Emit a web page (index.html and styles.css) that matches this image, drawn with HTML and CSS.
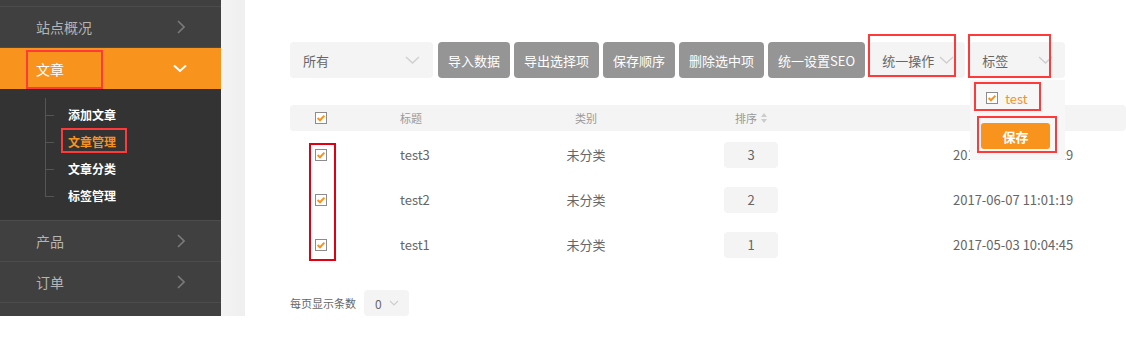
FILE: index.html
```html
<!DOCTYPE html>
<html lang="zh-CN">
<head>
    <meta charset="UTF-8">
    <title>文章管理</title>
    <link rel="stylesheet" href="styles.css">
</head>
<body>
<div class="page">
    <div class="sidebar">
        <div class="menu-top"></div>
        <div class="menu-item">
            <span>站点概况</span>
            <svg class="arrow" width="8" height="14" viewBox="0 0 8 14"><polyline points="1,1 7,7 1,13" fill="none" stroke="#7a7a7a" stroke-width="1.6"/></svg>
        </div>
        <div class="menu-item active">
            <span>文章</span>
            <svg class="arrow-down" width="14" height="9" viewBox="0 0 14 9"><polyline points="1,1.5 7,7 13,1.5" fill="none" stroke="#fff" stroke-width="2"/></svg>
        </div>
        <div class="submenu">
            <div class="sub-item">添加文章</div>
            <div class="sub-item current">文章管理</div>
            <div class="sub-item">文章分类</div>
            <div class="sub-item last">标签管理</div>
        </div>
        <div class="menu-item">
            <span>产品</span>
            <svg class="arrow" width="8" height="14" viewBox="0 0 8 14"><polyline points="1,1 7,7 1,13" fill="none" stroke="#7a7a7a" stroke-width="1.6"/></svg>
        </div>
        <div class="menu-item">
            <span>订单</span>
            <svg class="arrow" width="8" height="14" viewBox="0 0 8 14"><polyline points="1,1 7,7 1,13" fill="none" stroke="#7a7a7a" stroke-width="1.6"/></svg>
        </div>
        <div class="menu-item"></div>
    </div>
    <div class="strip"></div>
    <div class="main">
        <div class="toolbar">
            <div class="select wide">
                <span>所有</span>
                <svg class="caret" width="15" height="8" viewBox="0 0 15 8"><polyline points="1,1 7.5,7 14,1" fill="none" stroke="#cfcfcf" stroke-width="1.4"/></svg>
            </div>
            <button class="btn">导入数据</button>
            <button class="btn">导出选择项</button>
            <button class="btn">保存顺序</button>
            <button class="btn">删除选中项</button>
            <button class="btn">统一设置SEO</button>
            <div class="select op">
                <span>统一操作</span>
                <svg class="caret" width="15" height="8" viewBox="0 0 15 8"><polyline points="1,1 7.5,7 14,1" fill="none" stroke="#cfcfcf" stroke-width="1.4"/></svg>
            </div>
            <div class="select tag">
                <span>标签</span>
                <svg class="caret" width="15" height="8" viewBox="0 0 15 8"><polyline points="1,1 7.5,7 14,1" fill="none" stroke="#cfcfcf" stroke-width="1.4"/></svg>
                <div class="dropdown">
                    <div class="drop-option">
                        <svg class="check" width="12" height="12" viewBox="0 0 12 12"><rect x="0.5" y="0.5" width="11" height="11" fill="#fff" stroke="#8c8c8c"/><polyline points="2.6,6 5,8.3 9.4,3.6" fill="none" stroke="#f7931e" stroke-width="2"/></svg>
                        <span>test</span>
                    </div>
                    <button class="save">保存</button>
                </div>
            </div>
        </div>

        <div class="table">
            <div class="row head">
                <div class="cell c-check"><svg class="check" width="12" height="12" viewBox="0 0 12 12"><rect x="0.5" y="0.5" width="11" height="11" fill="#fff" stroke="#8c8c8c"/><polyline points="2.6,6 5,8.3 9.4,3.6" fill="none" stroke="#f7931e" stroke-width="2"/></svg></div>
                <div class="cell c-title">标题</div>
                <div class="cell c-cat">类别</div>
                <div class="cell c-sort">排序 <svg class="sort-icon" width="6" height="10" viewBox="0 0 6 10"><polygon points="3,0 6,4 0,4" fill="#ccc"/><polygon points="0,6 6,6 3,10" fill="#ccc"/></svg></div>
                <div class="cell c-date"></div>
            </div>
            <div class="row">
                <div class="cell c-check"><svg class="check" width="12" height="12" viewBox="0 0 12 12"><rect x="0.5" y="0.5" width="11" height="11" fill="#fff" stroke="#8c8c8c"/><polyline points="2.6,6 5,8.3 9.4,3.6" fill="none" stroke="#f7931e" stroke-width="2"/></svg></div>
                <div class="cell c-title">test3</div>
                <div class="cell c-cat">未分类</div>
                <div class="cell c-sort"><span class="order">3</span></div>
                <div class="cell c-date">2017-06-07 11:01:29</div>
            </div>
            <div class="row">
                <div class="cell c-check"><svg class="check" width="12" height="12" viewBox="0 0 12 12"><rect x="0.5" y="0.5" width="11" height="11" fill="#fff" stroke="#8c8c8c"/><polyline points="2.6,6 5,8.3 9.4,3.6" fill="none" stroke="#f7931e" stroke-width="2"/></svg></div>
                <div class="cell c-title">test2</div>
                <div class="cell c-cat">未分类</div>
                <div class="cell c-sort"><span class="order">2</span></div>
                <div class="cell c-date">2017-06-07 11:01:19</div>
            </div>
            <div class="row">
                <div class="cell c-check"><svg class="check" width="12" height="12" viewBox="0 0 12 12"><rect x="0.5" y="0.5" width="11" height="11" fill="#fff" stroke="#8c8c8c"/><polyline points="2.6,6 5,8.3 9.4,3.6" fill="none" stroke="#f7931e" stroke-width="2"/></svg></div>
                <div class="cell c-title">test1</div>
                <div class="cell c-cat">未分类</div>
                <div class="cell c-sort"><span class="order">1</span></div>
                <div class="cell c-date">2017-05-03 10:04:45</div>
            </div>
        </div>

        <div class="pager">
            <span>每页显示条数</span>
            <div class="select small">
                <span>0</span>
                <svg class="caret" width="10" height="6" viewBox="0 0 10 6"><polyline points="1,1 5,5 9,1" fill="none" stroke="#cfcfcf" stroke-width="1.2"/></svg>
            </div>
        </div>
    </div>
</div>

<!-- 标注框 -->
<div class="mark m-article"></div>
<div class="mark m-manage"></div>
<div class="mark m-checks"></div>
<div class="mark m-op"></div>
<div class="mark m-tag"></div>
<div class="mark m-test"></div>
<div class="mark m-save"></div>
</body>
</html>
```

FILE: styles.css
```css
body {
    margin: 0;
    font-family: "Microsoft YaHei", "Noto Sans CJK SC", sans-serif;
    background: #fff;
    position: relative;
}
.page {
    display: flex;
    height: 316px;
    overflow: hidden;
}

/* 侧边栏 */
.sidebar {
    width: 221px;
    background: #404040;
    flex-shrink: 0;
}
.menu-top {
    height: 6px;
    border-bottom: 1px solid #4c4c4c;
}
.menu-item {
    height: 40px;
    display: flex;
    align-items: center;
    justify-content: space-between;
    padding: 0 36px;
    border-bottom: 1px solid #4c4c4c;
    color: #b4b4b4;
    font-size: 14px;
}
.menu-item.active {
    background: #f8931e;
    color: #fff;
    border-bottom: none;
    height: 41px;
}
.menu-item.active .arrow-down {
    margin-right: -2px;
}
.submenu {
    background: #333;
    padding: 12px 0 11px 0;
    border-bottom: 1px solid #4c4c4c;
}
.sub-item {
    position: relative;
    height: 27px;
    line-height: 27px;
    padding-left: 68px;
    font-size: 12px;
    color: #fff;
    font-weight: bold;
}
.sub-item::before {
    content: "";
    position: absolute;
    left: 45px;
    top: 0;
    bottom: 0;
    width: 1px;
    background: #555;
}
.sub-item:first-child::before {
    top: -3px;
}
.sub-item.last::before {
    bottom: 12px;
}
.sub-item::after {
    content: "";
    position: absolute;
    left: 45px;
    top: 14px;
    width: 9px;
    height: 1px;
    background: #555;
}
.sub-item.current {
    color: #f8931e;
}

.strip {
    width: 24px;
    background: linear-gradient(to right, #f3f3f3, #efefef);
    flex-shrink: 0;
}

/* 主区域 */
.main {
    flex: 1;
    padding: 42px 0 0 45px;
    min-width: 0;
}
.toolbar {
    display: flex;
    gap: 4px;
    height: 36px;
}
.select {
    position: relative;
    background: #f4f4f4;
    border-radius: 4px;
    display: flex;
    align-items: center;
    justify-content: space-between;
    padding: 0 13px;
    font-size: 13px;
    color: #666;
    box-sizing: border-box;
    flex-shrink: 0;
}
.select.wide {
    width: 143px;
    margin-right: 1px;
}
.select.op {
    width: 96px;
    padding: 0 11px 0 13px;
}
.select.tag {
    width: 95px;
    margin-left: 1px;
    padding: 0 12px 0 12px;
}
.btn {
    border: none;
    background: #959595;
    color: #fff;
    font-family: inherit;
    font-size: 13px;
    border-radius: 4px;
    padding: 0 10px;
    height: 36px;
    flex-shrink: 0;
}

/* 标签下拉 */
.dropdown {
    position: absolute;
    top: 38px;
    left: 0;
    width: 95px;
    height: 80px;
    background: #f7f7f7;
    box-sizing: border-box;
    padding: 0 6px 0 11px;
    z-index: 2;
}
.drop-option {
    display: flex;
    align-items: center;
    gap: 7px;
    padding-left: 5px;
    height: 36px;
    color: #f8931e;
    font-size: 13px;
    border-bottom: 1px solid #e8e8e8;
    margin-right: 8px;
}
.save {
    margin-top: 6px;
    width: 69px;
    height: 26px;
    border: none;
    border-radius: 3px;
    background: #f8931e;
    color: #fff;
    font-family: inherit;
    font-size: 13px;
    font-weight: bold;
}

/* 表格 */
.table {
    margin-top: 27px;
}
.row {
    display: grid;
    grid-template-columns: 60px 170px 132px 198px 1fr;
    height: 45px;
    align-items: center;
    font-size: 13px;
    color: #666;
}
.row.head {
    height: 26px;
    background: #f4f4f4;
    border-radius: 4px;
    font-size: 11px;
    color: #999;
    margin-bottom: 1px;
}
.cell {
    display: flex;
    align-items: center;
}
.c-check {
    justify-content: center;
    padding-left: 1px;
}
.c-title {
    padding-left: 50px;
}
.c-cat, .c-sort {
    justify-content: center;
}
.c-sort .sort-icon {
    margin-left: 4px;
}
.c-date {
    padding-left: 103px;
}
.order {
    display: inline-block;
    width: 54px;
    height: 26px;
    line-height: 26px;
    text-align: center;
    background: #f4f4f4;
    border-radius: 4px;
}

/* 分页 */
.pager {
    margin-top: 23px;
    display: flex;
    align-items: center;
    gap: 8px;
    font-size: 11px;
    color: #666;
}
.select.small {
    width: 45px;
    height: 26px;
    padding: 0 10px 0 11px;
    font-size: 12px;
}

/* 红色标注框 */
.mark {
    position: absolute;
    border: 2px solid #ff3a3a;
    box-sizing: border-box;
    z-index: 5;
}
.m-article { left: 26px; top: 50px; width: 77px; height: 39px; }
.m-manage { left: 61px; top: 128px; width: 66px; height: 25px; }
.m-checks { left: 309px; top: 143px; width: 27px; height: 118px; border-color: #e00012; }
.m-op { left: 868px; top: 34px; width: 88px; height: 43px; }
.m-tag { left: 968px; top: 34px; width: 83px; height: 44px; }
.m-test { left: 974px; top: 82px; width: 67px; height: 29px; }
.m-save { left: 977px; top: 116px; width: 80px; height: 37px; }
```
